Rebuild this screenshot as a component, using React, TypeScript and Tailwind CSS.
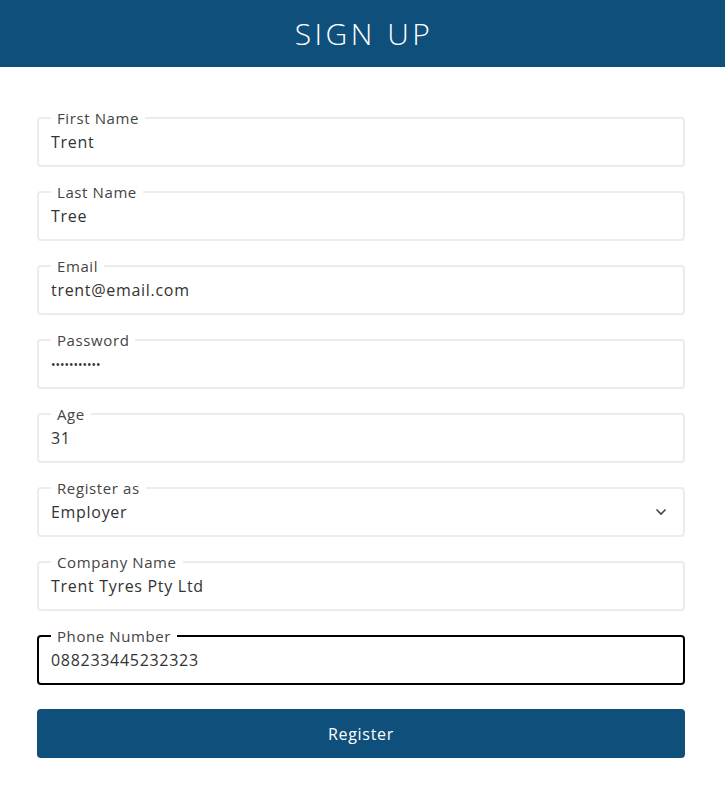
import { useState } from "react"

type Field = {
    label: string
    value: string
    type?: string
}

const fields: Field[] = [
    { label: "First Name", value: "Trent" },
    { label: "Last Name", value: "Tree" },
    { label: "Email", value: "trent@email.com" },
    { label: "Password", value: "trent123456", type: "password" },
    { label: "Age", value: "31" },
]

const inputCls = "block h-8 w-full bg-transparent text-[16px] tracking-[0.7px] text-[#333] outline-none"

function Box({ label, focused, children }: { label: string; focused?: boolean; children: React.ReactNode }) {
    return (
        <fieldset className={`rounded-[4px] border-2 px-3 pb-[7px] ${focused ? "border-black" : "border-[#ececec]"}`}>
            <legend className="px-[6px] text-[15px] leading-4 tracking-[0.6px] text-[#444]">{label}</legend>
            {children}
        </fieldset>
    )
}

export default function App() {
    const [role, setRole] = useState("Employer")
    const [phone, setPhone] = useState("088233445232323")

    return (
        <div className="min-h-screen bg-white font-['Open_Sans',sans-serif]">
            <div className="flex h-[67px] items-center justify-center bg-[#0f4f7b]">
                <h1 className="pl-[3px] text-[30px] font-light tracking-[3.5px] text-white">SIGN UP</h1>
            </div>
            <form className="flex flex-col gap-[17px] pl-[37px] pr-[40px] pt-[43px]" onSubmit={e => e.preventDefault()}>
                {fields.map(f => (
                    <Box key={f.label} label={f.label}>
                        <input
                            type={f.type ?? "text"}
                            defaultValue={f.value}
                            className={f.type === "password" ? "block h-8 w-full bg-transparent text-[12px] text-[#333] outline-none" : inputCls}
                        />
                    </Box>
                ))}
                <Box label="Register as">
                    <div className="flex h-8 items-center justify-between text-[16px] tracking-[0.7px] text-[#333]">
                        <select
                            value={role}
                            onChange={e => setRole(e.target.value)}
                            className="w-full appearance-none bg-transparent outline-none"
                        >
                            <option>Employer</option>
                            <option>Employee</option>
                        </select>
                        <svg width="12" height="8" viewBox="0 0 12 8" className="mr-[4px] shrink-0">
                            <path d="M1.5 1.5 6 6l4.5-4.5" fill="none" stroke="#444" strokeWidth="1.6" />
                        </svg>
                    </div>
                </Box>
                <Box label="Company Name">
                    <input defaultValue="Trent Tyres Pty Ltd" className={inputCls} />
                </Box>
                <Box label="Phone Number" focused>
                    <input value={phone} onChange={e => setPhone(e.target.value)} className={inputCls} />
                </Box>
                <button className="mt-[7px] h-[49px] rounded-[4px] bg-[#0f4f7b] text-[16px] tracking-[0.7px] text-white">
                    Register
                </button>
            </form>
        </div>
    )
}
